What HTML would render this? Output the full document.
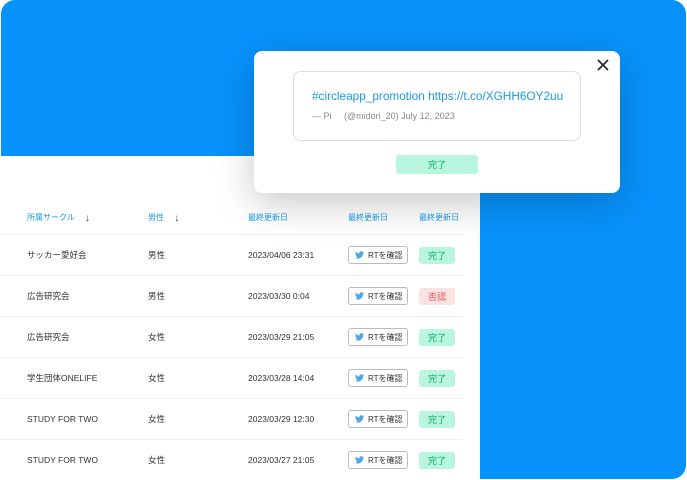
<!DOCTYPE html>
<html><head><meta charset="utf-8"><style>
*{margin:0;padding:0;box-sizing:border-box}
body{width:687px;height:480px;background:#fff;position:relative;overflow:hidden;font-family:"Liberation Sans","Noto Sans CJK JP",sans-serif}
.blue{position:absolute;left:1px;top:0;width:685px;height:479px;background:#0892fb;border-radius:14px}
.card{position:absolute;left:0;top:156px;width:480px;height:324px;background:#fff}
.h{position:absolute;top:212px;font-size:8px;color:#1a9ae6}
.h b{font-weight:normal;color:#333;font-size:10px;position:relative;top:1px}
.line{position:absolute;left:0;width:463px;height:1px;background:#eceef0}
.c{position:absolute;font-size:8.5px;color:#333;transform:translateY(-50%)}
.rt{position:absolute;left:348px;width:60px;height:18px;border:1px solid #bbb;border-radius:3px;font-size:8px;color:#333;display:flex;align-items:center;padding-left:6px;gap:4px;background:#fff;white-space:nowrap}
.st{position:absolute;left:419px;width:36px;height:17px;border-radius:3px;font-size:9px;display:flex;align-items:center;justify-content:center}
.ok{background:#b8f7de;color:#10a86a}
.ng{background:#fde2e2;color:#e05555}
.modal{position:absolute;left:254px;top:51px;width:366px;height:142px;background:#fff;border-radius:8px;box-shadow:0 10px 40px rgba(0,0,0,.22)}
.quote{position:absolute;left:39px;top:20px;width:288px;height:70px;border:1px solid #ddd;border-radius:8px}
</style></head><body>
<div class="blue"></div>
<div class="card"></div>
<div class="h" style="left:27px">所属サークル　 <b>↓</b></div>
<div class="h" style="left:148px">男性　 <b>↓</b></div>
<div class="h" style="left:248px">最終更新日</div>
<div class="h" style="left:348px">最終更新日</div>
<div class="h" style="left:419px">最終更新日</div>
<div class="line" style="top:234px"></div>
<div class="line" style="top:275px"></div>
<div class="line" style="top:316px"></div>
<div class="line" style="top:357px"></div>
<div class="line" style="top:398px"></div>
<div class="line" style="top:439px"></div>

<div class="c" style="left:27px;top:255px">サッカー愛好会</div><div class="c" style="left:148px;top:255px">男性</div><div class="c" style="left:248px;top:255px">2023/04/06 23:31</div>
<div class="c" style="left:27px;top:296px">広告研究会</div><div class="c" style="left:148px;top:296px">男性</div><div class="c" style="left:248px;top:296px">2023/03/30 0:04</div>
<div class="c" style="left:27px;top:337px">広告研究会</div><div class="c" style="left:148px;top:337px">女性</div><div class="c" style="left:248px;top:337px">2023/03/29 21:05</div>
<div class="c" style="left:27px;top:378px">学生団体ONELIFE</div><div class="c" style="left:148px;top:378px">女性</div><div class="c" style="left:248px;top:378px">2023/03/28 14:04</div>
<div class="c" style="left:27px;top:419px">STUDY FOR TWO</div><div class="c" style="left:148px;top:419px">女性</div><div class="c" style="left:248px;top:419px">2023/03/29 12:30</div>
<div class="c" style="left:27px;top:460px">STUDY FOR TWO</div><div class="c" style="left:148px;top:460px">女性</div><div class="c" style="left:248px;top:460px">2023/03/27 21:05</div>

<div class="rt" style="top:246px"><svg width="9" height="8" viewBox="0 0 24 20"><path fill="#4aa6e8" d="M24 2.4a10 10 0 0 1-2.8.8A5 5 0 0 0 23.3.4a10 10 0 0 1-3.1 1.2A4.9 4.9 0 0 0 11.8 6 14 14 0 0 1 1.7.9a4.9 4.9 0 0 0 1.5 6.6 4.9 4.9 0 0 1-2.2-.6 4.9 4.9 0 0 0 3.9 4.9 4.9 4.9 0 0 1-2.2.1 4.9 4.9 0 0 0 4.600 3.4A9.9 9.9 0 0 1 0 17.3 14 14 0 0 0 7.5 19.5c9 0 14-7.5 14-14v-.6A10 10 0 0 0 24 2.4z"/></svg>RTを確認</div>
<div class="rt" style="top:287px"><svg width="9" height="8" viewBox="0 0 24 20"><path fill="#4aa6e8" d="M24 2.4a10 10 0 0 1-2.8.8A5 5 0 0 0 23.3.4a10 10 0 0 1-3.1 1.2A4.9 4.9 0 0 0 11.8 6 14 14 0 0 1 1.7.9a4.9 4.9 0 0 0 1.5 6.6 4.9 4.9 0 0 1-2.2-.6 4.9 4.9 0 0 0 3.9 4.9 4.9 4.9 0 0 1-2.2.1 4.9 4.9 0 0 0 4.6 3.4A9.9 9.9 0 0 1 0 17.3 14 14 0 0 0 7.5 19.5c9 0 14-7.5 14-14v-.6A10 10 0 0 0 24 2.4z"/></svg>RTを確認</div>
<div class="rt" style="top:328px"><svg width="9" height="8" viewBox="0 0 24 20"><path fill="#4aa6e8" d="M24 2.4a10 10 0 0 1-2.8.8A5 5 0 0 0 23.3.4a10 10 0 0 1-3.1 1.2A4.9 4.9 0 0 0 11.8 6 14 14 0 0 1 1.7.9a4.9 4.9 0 0 0 1.5 6.6 4.9 4.9 0 0 1-2.2-.6 4.9 4.9 0 0 0 3.9 4.9 4.9 4.9 0 0 1-2.2.1 4.9 4.9 0 0 0 4.6 3.4A9.9 9.9 0 0 1 0 17.3 14 14 0 0 0 7.5 19.5c9 0 14-7.5 14-14v-.6A10 10 0 0 0 24 2.4z"/></svg>RTを確認</div>
<div class="rt" style="top:369px"><svg width="9" height="8" viewBox="0 0 24 20"><path fill="#4aa6e8" d="M24 2.4a10 10 0 0 1-2.8.8A5 5 0 0 0 23.3.4a10 10 0 0 1-3.1 1.2A4.9 4.9 0 0 0 11.8 6 14 14 0 0 1 1.7.9a4.9 4.9 0 0 0 1.5 6.6 4.9 4.9 0 0 1-2.2-.6 4.9 4.9 0 0 0 3.9 4.9 4.9 4.9 0 0 1-2.2.1 4.9 4.9 0 0 0 4.6 3.4A9.9 9.9 0 0 1 0 17.3 14 14 0 0 0 7.5 19.5c9 0 14-7.5 14-14v-.6A10 10 0 0 0 24 2.4z"/></svg>RTを確認</div>
<div class="rt" style="top:410px"><svg width="9" height="8" viewBox="0 0 24 20"><path fill="#4aa6e8" d="M24 2.4a10 10 0 0 1-2.8.8A5 5 0 0 0 23.3.4a10 10 0 0 1-3.1 1.2A4.9 4.9 0 0 0 11.8 6 14 14 0 0 1 1.7.9a4.9 4.9 0 0 0 1.5 6.6 4.9 4.9 0 0 1-2.2-.6 4.9 4.9 0 0 0 3.9 4.9 4.9 4.9 0 0 1-2.2.1 4.9 4.9 0 0 0 4.6 3.4A9.9 9.9 0 0 1 0 17.3 14 14 0 0 0 7.5 19.5c9 0 14-7.5 14-14v-.6A10 10 0 0 0 24 2.4z"/></svg>RTを確認</div>
<div class="rt" style="top:451px"><svg width="9" height="8" viewBox="0 0 24 20"><path fill="#4aa6e8" d="M24 2.4a10 10 0 0 1-2.8.8A5 5 0 0 0 23.3.4a10 10 0 0 1-3.1 1.2A4.9 4.9 0 0 0 11.8 6 14 14 0 0 1 1.7.9a4.9 4.9 0 0 0 1.5 6.6 4.9 4.9 0 0 1-2.2-.6 4.9 4.9 0 0 0 3.9 4.9 4.9 4.9 0 0 1-2.2.1 4.9 4.9 0 0 0 4.6 3.4A9.9 9.9 0 0 1 0 17.3 14 14 0 0 0 7.5 19.5c9 0 14-7.5 14-14v-.6A10 10 0 0 0 24 2.4z"/></svg>RTを確認</div>

<div class="st ok" style="top:247px">完了</div>
<div class="st ng" style="top:288px">否認</div>
<div class="st ok" style="top:329px">完了</div>
<div class="st ok" style="top:370px">完了</div>
<div class="st ok" style="top:411px">完了</div>
<div class="st ok" style="top:452px">完了</div>

<div class="modal">
<svg style="position:absolute;left:343px;top:8px" width="12" height="12" viewBox="0 0 12 12"><path d="M1 1L11 11M11 1L1 11" stroke="#222" stroke-width="1.6"/></svg>
<div class="quote">
<div style="position:absolute;left:18px;top:17px;font-size:11.8px;color:#1a9ae6;white-space:nowrap">#circleapp_promotion https://t.co/XGHH6OY2uu</div>
<div style="position:absolute;left:18px;top:39px;font-size:9px;color:#888;white-space:nowrap">— Pi &nbsp;&nbsp;&nbsp;&nbsp;(@midori_20) July 12, 2023</div>
</div>
<div style="position:absolute;left:142px;top:104px;width:82px;height:19px;background:#b8f7de;color:#10a86a;border-radius:3px;font-size:9px;display:flex;align-items:center;justify-content:center">完了</div>
</div>
</body></html>
